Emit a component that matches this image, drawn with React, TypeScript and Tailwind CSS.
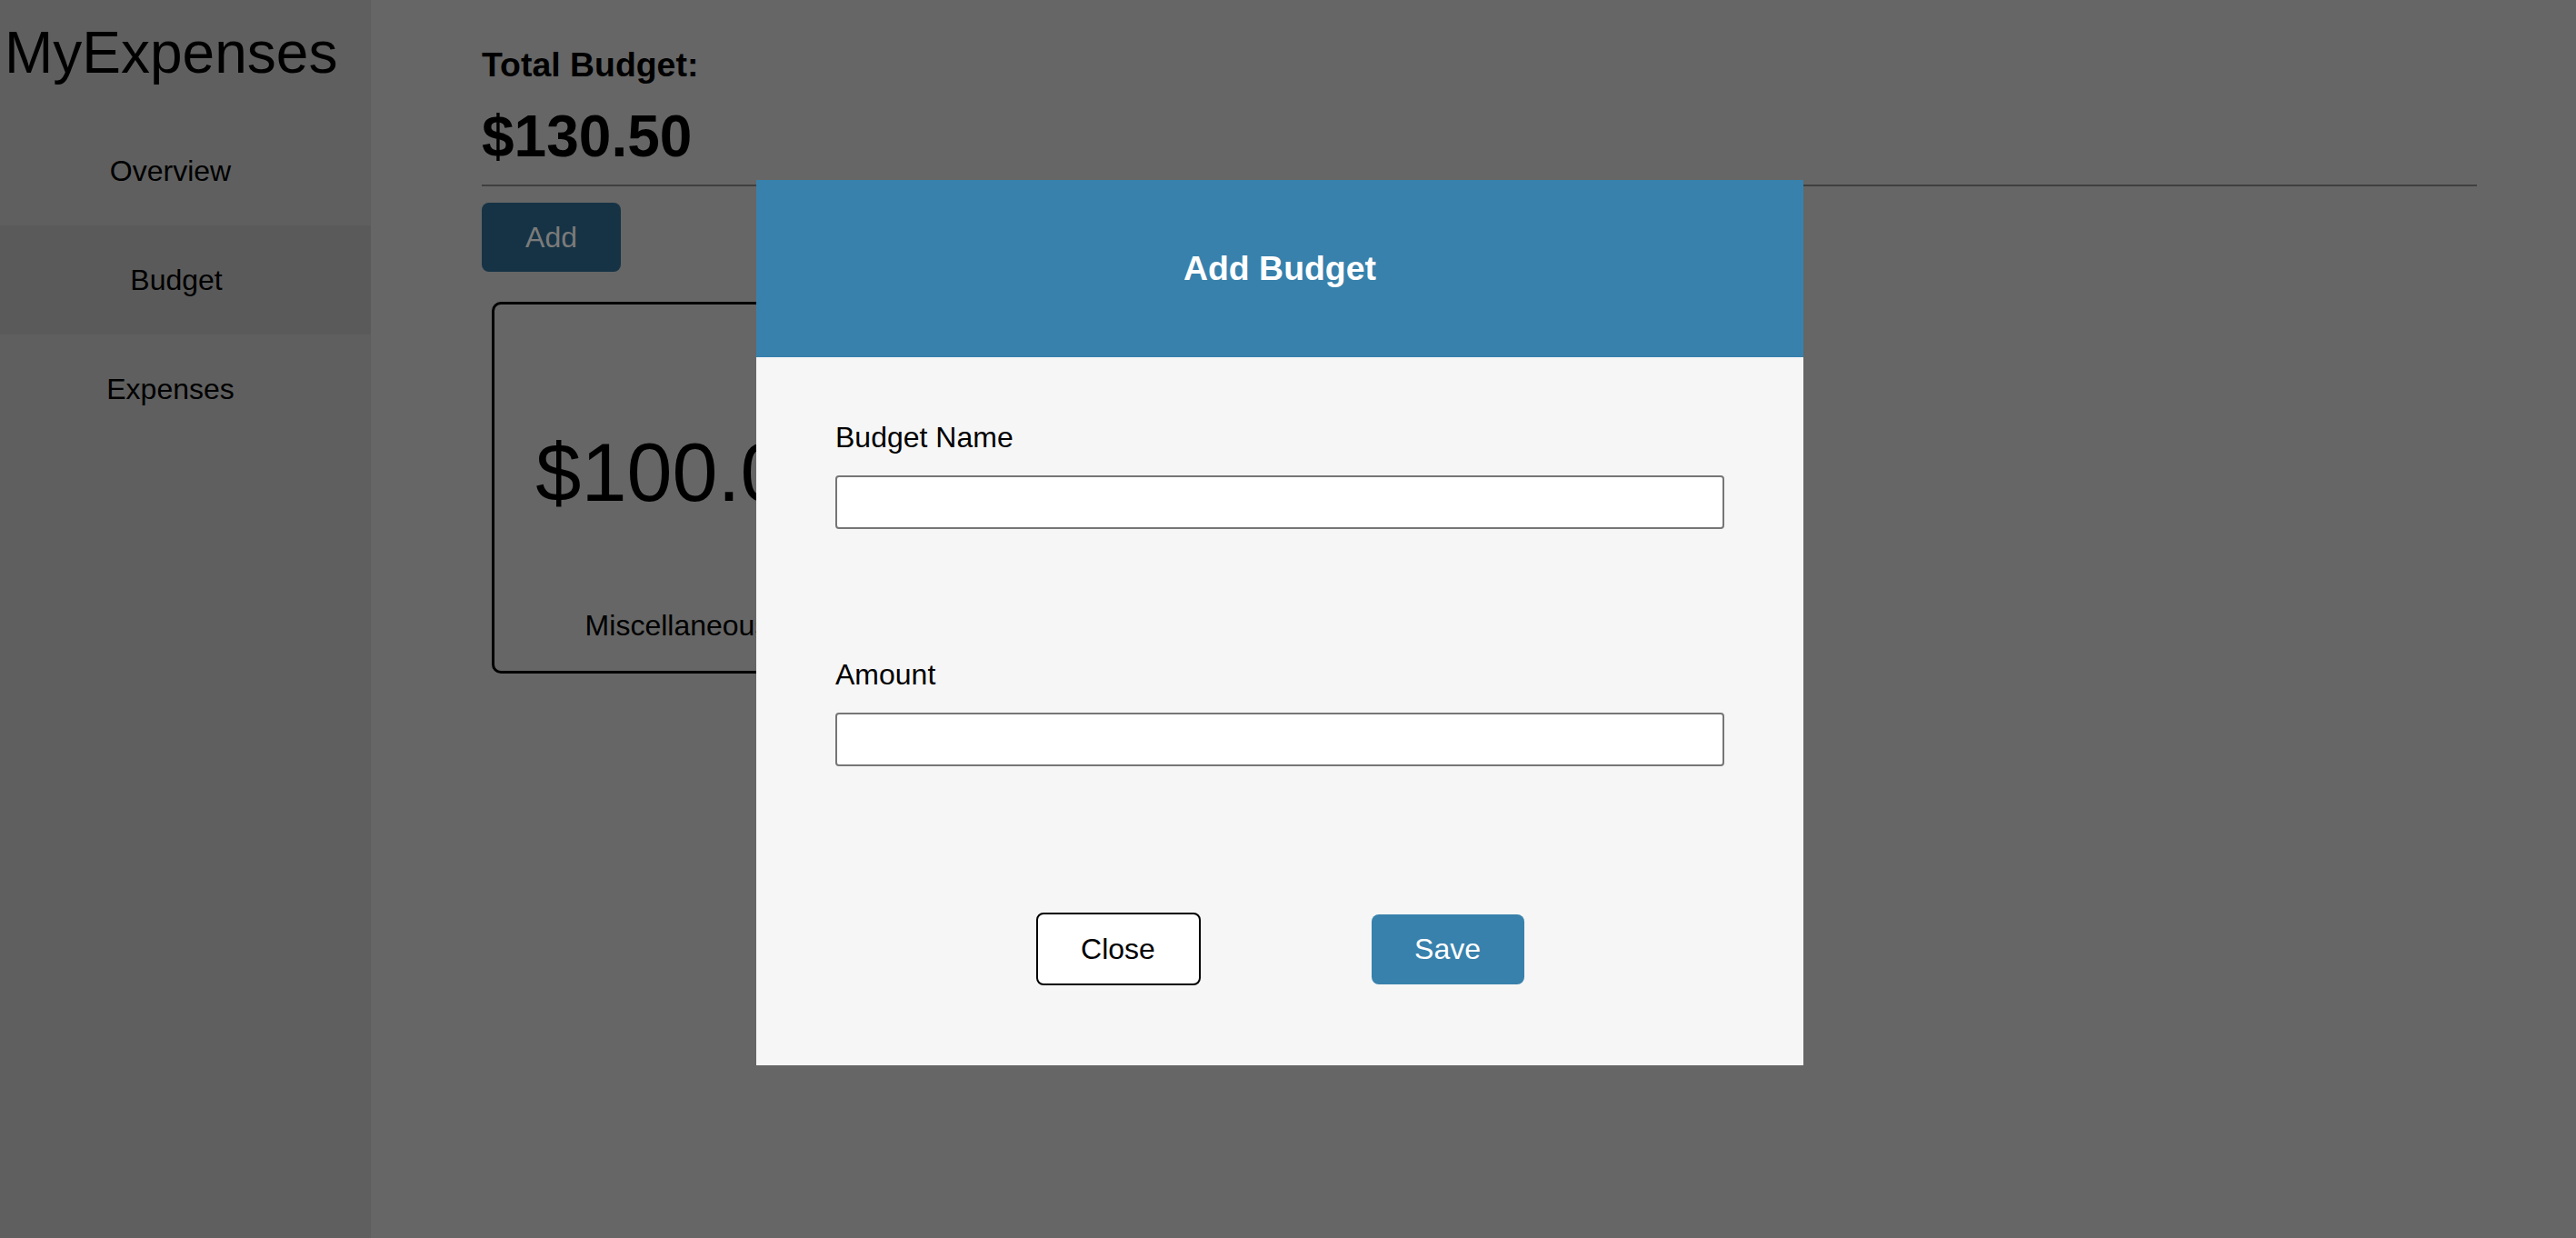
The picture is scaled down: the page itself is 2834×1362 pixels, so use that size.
export default function App() {
  return (
    <div className="relative flex h-[1362px] w-[2834px] overflow-hidden bg-[#666666] font-['Liberation_Sans',Arial,sans-serif] text-black">
      <aside className="flex w-[408px] shrink-0 flex-col bg-[#5f5f5f]">
        <div className="h-[128px] pl-[5px] pt-[26px]">
          <h1 className="text-[64px] font-normal leading-none">MyExpenses</h1>
        </div>
        <nav className="flex flex-col">
          <div className="flex h-[120px] items-center justify-center pr-[33px] text-[32px] leading-none">Overview</div>
          <div className="flex h-[120px] items-center justify-center bg-[#5a5a5a] pr-[20px] text-[32px] leading-none">Budget</div>
          <div className="flex h-[120px] items-center justify-center pr-[33px] text-[32px] leading-none">Expenses</div>
        </nav>
      </aside>
      <main className="flex-1 pl-[122px] pt-[53px]">
        <div className="w-[2195px]">
          <h3 className="text-[37.44px] font-bold leading-none">Total Budget:</h3>
          <h1 className="mt-[28px] text-[64px] font-bold leading-none">$130.50</h1>
          <div className="mt-[21px] h-[2px] bg-[#404040]" />
          <button className="mt-[18px] flex h-[76px] w-[153px] items-center justify-center rounded-[8px] bg-[#163345] text-[32px] leading-none text-[#7b7b7b]">
            Add
          </button>
          <div className="ml-[11px] mt-[33px] flex h-[409px] w-[408px] flex-col items-center rounded-[10px] border-[3px] border-black pt-[140px]">
            <div className="pl-[14px] text-[90px] leading-none">$100.00</div>
            <div className="mt-[107px] text-[32px] leading-none">Miscellaneous</div>
          </div>
        </div>
      </main>

      <div className="absolute inset-0 flex items-center justify-center">
        <div className="mr-[18px] mt-[8px] flex w-[1152px] flex-col">
          <div className="flex h-[195px] items-center justify-center bg-[#3881ac]">
            <h3 className="text-[37.44px] font-bold leading-none text-white">Add Budget</h3>
          </div>
          <div className="flex flex-col bg-[#f6f6f6] px-[87px] pb-[88px] pt-[72px]">
            <label className="text-[32px] leading-none">Budget Name</label>
            <input type="text" className="mt-[26px] h-[59px] w-full rounded-[4px] border-2 border-[#767676] bg-white" />
            <label className="mt-[144px] text-[32px] leading-none">Amount</label>
            <input type="text" className="mt-[26px] h-[59px] w-full rounded-[4px] border-2 border-[#767676] bg-white" />
            <div className="mt-[161px] flex h-[80px] items-center justify-center gap-[188px]">
              <button className="flex h-[80px] w-[181px] items-center justify-center rounded-[8px] border-2 border-black bg-white text-[32px] leading-none text-black">
                Close
              </button>
              <button className="flex h-[77px] w-[168px] items-center justify-center rounded-[8px] bg-[#3881ac] text-[32px] leading-none text-white">
                Save
              </button>
            </div>
          </div>
        </div>
      </div>
    </div>
  );
}
